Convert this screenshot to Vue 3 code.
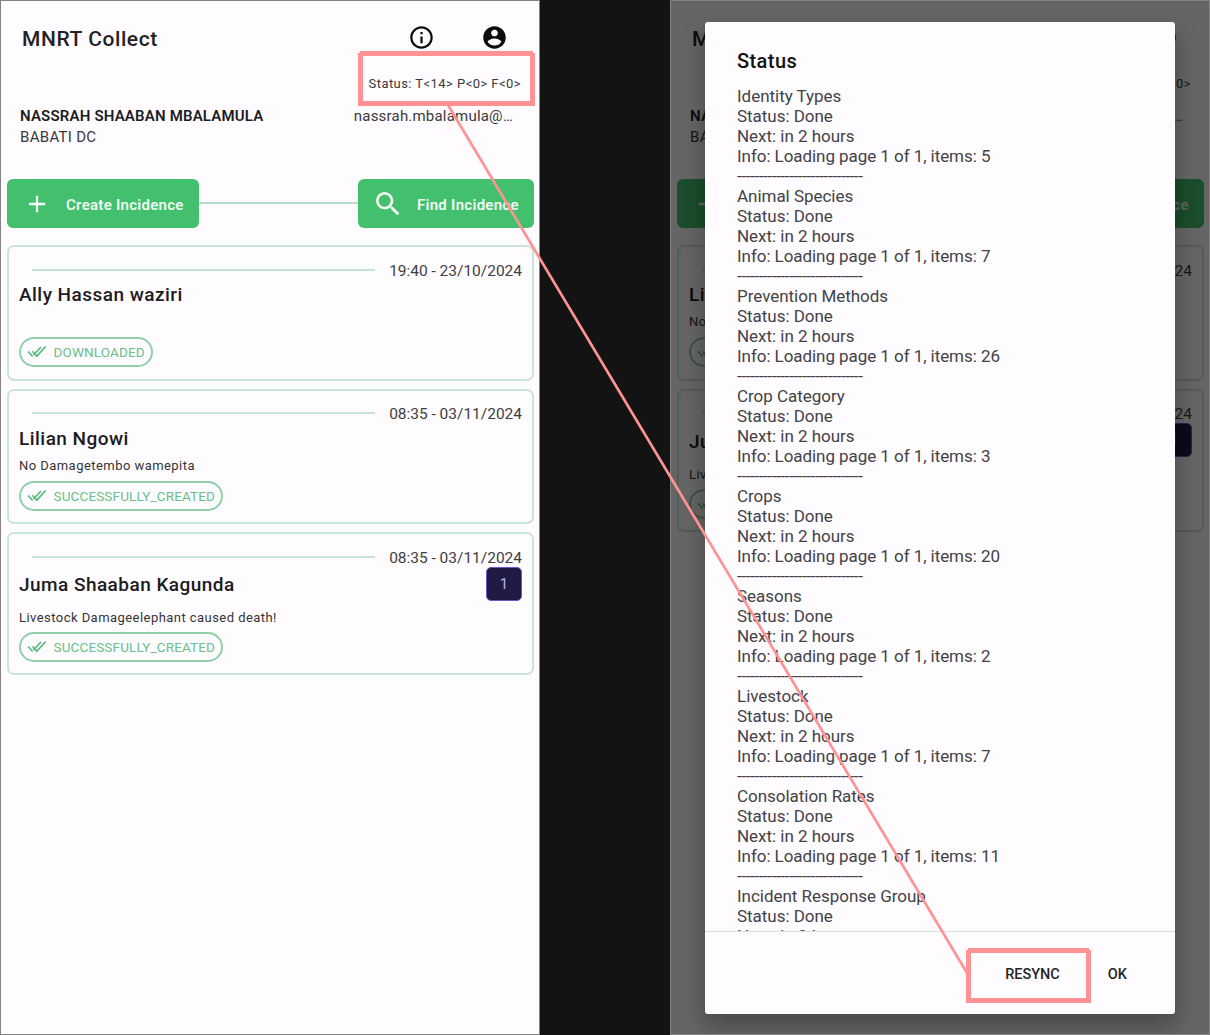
<script setup>
const lilian = { date: '08:35 - 03/11/2024', name: 'Lilian Ngowi', note: 'No Damagetembo wamepita', state: 'SUCCESSFULLY_CREATED', kind: 'noted' }
const juma = { date: '08:35 - 03/11/2024', name: 'Juma Shaaban Kagunda', note: 'Livestock Damageelephant caused death!', state: 'SUCCESSFULLY_CREATED', kind: 'counted', count: 1 }
const ally = { date: '19:40 - 23/10/2024', name: 'Ally Hassan waziri', note: '', state: 'DOWNLOADED', kind: 'plain' }

const screens = [
  { id: 'list', cards: [ally, lilian, juma], dialog: false },
  { id: 'sync', cards: [lilian, juma], dialog: true },
]

const resources = [
  { name: 'Identity Types', lines: ['Status: Done', 'Next: in 2 hours'], items: 5 },
  { name: 'Animal Species', lines: ['Status: Done', 'Next: in 2 hours'], items: 7 },
  { name: 'Prevention Methods', lines: ['Status: Done', 'Next: in 2 hours'], items: 26 },
  { name: 'Crop Category', lines: ['Status: Done', 'Next: in 2 hours'], items: 3 },
  { name: 'Crops', lines: ['Status: Done', 'Next: in 2 hours'], items: 20 },
  { name: 'Seasons', lines: ['Status: Done', 'Next: in 2 hours'], items: 2 },
  { name: 'Livestock', lines: ['Status: Done', 'Next: in 2 hours'], items: 7 },
  { name: 'Consolation Rates', lines: ['Status: Done', 'Next: in 2 hours'], items: 11 },
  { name: 'Incident Response Group', lines: ['Status: Done', 'Next: in 2 hours'] },
]
const rule = '-'.repeat(29)
</script>

<template>
  <main class="board">
    <section v-for="s in screens" :key="s.id" class="phone" :class="s.id">
      <header class="bar">
        <h1>MNRT Collect</h1>
        <svg class="ico" viewBox="0 0 24 24"><path d="M11 7h2v2h-2zm0 4h2v6h-2zm1-9C6.480 2 2 6.480 2 12s4.480 10 10 10 10-4.480 10-10S17.520 2 12 2zm0 18c-4.410 0-8-3.590-8-8s3.590-8 8-8 8 3.590 8 8-3.590 8-8 8z" /></svg>
        <svg class="ico" viewBox="0 0 24 24"><path d="M12 2C6.480 2 2 6.480 2 12s4.480 10 10 10 10-4.480 10-10S17.520 2 12 2zm0 3c1.660 0 3 1.340 3 3s-1.340 3-3 3-3-1.340-3-3 1.340-3 3-3zm0 14.200c-2.500 0-4.710-1.280-6-3.220.030-1.990 4-3.080 6-3.080 1.990 0 5.970 1.090 6 3.080-1.290 1.940-3.500 3.220-6 3.220z" /></svg>
      </header>
      <p class="sync-state">Status: T&lt;14&gt; P&lt;0&gt; F&lt;0&gt;</p>
      <div class="user">
        <div>
          <p class="user-name">NASSRAH SHAABAN MBALAMULA</p>
          <p class="district">BABATI DC</p>
        </div>
        <p class="mail">nassrah.mbalamula@…</p>
      </div>
      <nav class="actions">
        <button class="btn create">
          <svg viewBox="0 0 24 24"><path d="M19 13h-6v6h-2v-6H5v-2h6V5h2v6h6z" /></svg>
          <span>Create Incidence</span>
        </button>
        <i class="link"></i>
        <button class="btn find">
          <svg viewBox="0 0 24 24"><path d="M15.500 14h-.790l-.280-.270A6.471 6.471 0 0 0 16 9.500 6.500 6.500 0 1 0 9.500 16c1.610 0 3.090-.590 4.230-1.570l.270.280v.790l5 4.990L20.490 19l-4.990-5zm-6 0C7.010 14 5 11.990 5 9.500S7.010 5 9.500 5 14 7.010 14 9.500 11.990 14 9.500 14z" /></svg>
          <span>Find Incidence</span>
        </button>
      </nav>
      <div class="cards">
        <article v-for="c in s.cards" :key="c.name" class="card" :class="c.kind">
          <div class="when"><i></i><span>{{ c.date }}</span></div>
          <div class="head">
            <h2>{{ c.name }}</h2>
            <b v-if="c.count" class="count">{{ c.count }}</b>
          </div>
          <p class="note">{{ c.note }}</p>
          <div class="chip">
            <svg viewBox="0 0 20 14"><path d="M1 6.500l4.700 5M5.500 6.200l4.300 5L18.800 1.500M6.500 9.800L14 2" /></svg>
            <span>{{ c.state }}</span>
          </div>
        </article>
      </div>

      <div v-if="s.dialog" class="scrim">
        <div class="dialog">
          <h3>Status</h3>
          <div class="body">
            <div v-for="r in resources" :key="r.name">
              <p>{{ r.name }}</p>
              <p v-for="line in r.lines" :key="line">{{ line }}</p>
              <template v-if="r.items">
                <p class="info">Info: Loading page 1 of 1, items: {{ r.items }}</p>
                <p class="rule">{{ rule }}</p>
              </template>
            </div>
          </div>
          <footer>
            <button>RESYNC</button>
            <button>OK</button>
          </footer>
        </div>
      </div>
    </section>

    <svg class="marks" viewBox="0 0 1210 1035">
      <g fill="#ff9393" fill-rule="evenodd" shape-rendering="crispEdges">
        <path d="M358 53h2v-2h173v2h2v53H358zM363 56v45h167V56z" />
        <path d="M966 950h2v-2h121v2h2v53H966zM971 953v45h115v-45z" />
      </g>
      <path d="M448 105L967 973" stroke="#ff9393" stroke-width="2.700" />
    </svg>
  </main>
</template>

<style>
body { background: #131313; }
</style>

<style scoped>
* { box-sizing: border-box; margin: 0; padding: 0; }
.board {
  position: relative;
  display: flex;
  justify-content: space-between;
  width: 1210px;
  height: 1035px;
  overflow: hidden;
  background: #131313;
  font-family: Roboto, "Liberation Sans", sans-serif;
  color: #1c1b1e;
}
.phone {
  position: relative;
  width: 540px;
  height: 1035px;
  background: #fefcfe;
  border: 1px solid #858286;
  padding: 0 5px 0 6px;
  overflow: hidden;
}
.bar { display: flex; align-items: center; height: 74px; padding: 0 26.500px 2px 15px; }
.bar h1 { flex: 1; padding-top: 3px; font-size: 21px; font-weight: 500; letter-spacing: 0.580px; color: #232225; }
.ico { width: 27px; height: 27px; margin-left: 45.500px; fill: #0c0c0d; }
.sync-state { height: 18px; line-height: 18px; text-align: right; padding-right: 13px; font-size: 13px; letter-spacing: 0.440px; color: #3a393c; }
.user { display: flex; justify-content: space-between; height: 86px; padding: 13px 21px 0 13px; }
.user-name { font-size: 15px; font-weight: 600; letter-spacing: 0.180px; line-height: 20px; }
.district { padding-top: 1px; font-size: 15px; line-height: 20px; letter-spacing: 0.300px; color: #3a393c; }
.mail { font-size: 15px; letter-spacing: 0.200px; line-height: 20px; color: #3a393c; }
.actions { display: flex; align-items: center; height: 49px; }
.btn {
  display: flex; align-items: center; height: 49px; border: 0; border-radius: 6px;
  background: #43c06d; color: #f0faf2; font: 600 15px Roboto, sans-serif; letter-spacing: 0.280px; white-space: nowrap;
}
.btn span { padding-top: 2px; }
.btn svg { fill: #f3fbf5; flex: none; }
.create { width: 192px; padding-left: 16px; }
.create svg { width: 28px; height: 28px; margin-right: 15px; }
.find { width: 176px; padding-left: 14px; }
.find svg { width: 32px; height: 32px; margin-right: 13px; }
.link { flex: 1; height: 2px; background: #b7dfc7; margin-bottom: 1px; }
.cards { display: flex; flex-direction: column; gap: 8px; padding-top: 17px; }
.card { height: 135.500px; border: 2px solid #c9e5d5; border-radius: 7px; padding: 13px 10px 0 10px; }
.when { display: flex; align-items: center; height: 21px; padding-left: 13px; }
.when i { width: 343px; height: 2px; background: #c6e3d1; margin-bottom: 2px; }
.when span { flex: 1; text-align: right; font-size: 15.500px; letter-spacing: -0.010px; color: #3f3e41; white-space: nowrap; }
.head { display: flex; justify-content: space-between; align-items: center; height: 27px; }
.head h2 { font-size: 19px; font-weight: 500; letter-spacing: 0.460px; }
.note { height: 29px; line-height: 28px; font-size: 13px; letter-spacing: 0.450px; color: #353437; }
.chip { display: inline-flex; align-items: center; height: 30px; margin-left: -0.500px; border: 2px solid #8fd0a9; border-radius: 15px; padding: 0 6px; color: #6abf8b; font-size: 13.500px; font-weight: 400; letter-spacing: 0.140px; }
.chip svg { width: 20px; height: 14px; margin-right: 7px; fill: none; stroke: #5cb981; stroke-width: 1.700; }
.counted { height: 143px; }
.counted .head { height: 33px; }
.counted .note { height: 31px; line-height: 33px; }
.count { width: 36px; height: 34px; margin-bottom: 2px; border: 1px solid #605bd0; border-radius: 5px; background: #201b44; color: #b9b6f4; text-align: center; font-size: 15px; font-weight: 400; line-height: 32px; }
.scrim { position: absolute; inset: -1px; display: flex; justify-content: center; align-items: flex-start; padding-top: 22px; background: rgba(0, 0, 0, 0.6); }
.dialog { display: flex; flex-direction: column; width: 470px; height: 992px; border-radius: 3px; background: #fefcfe; box-shadow: 0 12px 22px 2px rgba(0, 0, 0, 0.26); }
.dialog h3 { height: 64px; padding: 28px 0 0 32px; font-size: 20px; line-height: 23px; font-weight: 500; letter-spacing: 0.420px; color: #111; }
.body { flex: 1; min-height: 0; overflow: hidden; padding-left: 32px; border-bottom: 1px solid #dedcdf; font-size: 17px; line-height: 20px; letter-spacing: -0.030px; color: #434246; white-space: nowrap; }
.info { letter-spacing: -0.060px; }
.rule { letter-spacing: -0.370px; }
.dialog footer { display: flex; justify-content: flex-end; height: 82px; padding: 2px 48px 0 0; gap: 48px; }
.dialog footer button { border: 0; background: none; font: 500 14.500px Roboto, sans-serif; color: #252427; }
.marks { position: absolute; left: 0; top: 0; width: 1210px; height: 1035px; fill: none; pointer-events: none; }
</style>
